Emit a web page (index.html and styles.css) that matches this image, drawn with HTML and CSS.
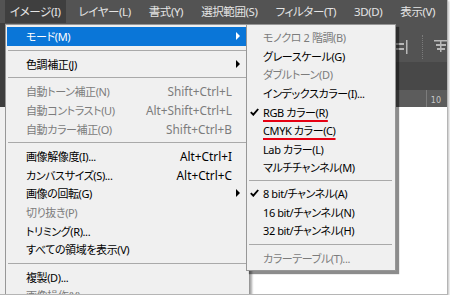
FILE: index.html
```html
<!DOCTYPE html>
<html lang="ja">
<head>
<meta charset="utf-8">
<link rel="stylesheet" href="styles.css">
</head>
<body>
<div class="frame">
  <div class="menubar">
    <span class="mb-item active">イメージ(I)</span>
    <span class="mb-item">レイヤー(L)</span>
    <span class="mb-item">書式(Y)</span>
    <span class="mb-item">選択範囲(S)</span>
    <span class="mb-item">フィルター(T)</span>
    <span class="mb-item">3D(D)</span>
    <span class="mb-item">表示(V)</span>
  </div>
  <div class="workspace">
    <div class="leftstrip"></div>
    <div class="main">
      <div class="optionsbar">
        <svg class="ico" width="12" height="14" viewBox="0 0 12 14"><rect x="0" y="3" width="8" height="2" fill="#b8b8b8"/><rect x="0" y="8" width="8" height="2" fill="#b8b8b8"/><rect x="10" y="0" width="1.5" height="14" fill="#b8b8b8"/></svg>
        <span class="divider"></span>
        <svg class="ico" width="14" height="14" viewBox="0 0 14 14"><rect x="0" y="1" width="14" height="1.5" fill="#b8b8b8"/><rect x="6" y="1" width="1.5" height="12" fill="#b8b8b8"/><rect x="2" y="5" width="10" height="2" fill="#b8b8b8"/><rect x="3" y="9" width="8" height="2" fill="#b8b8b8"/></svg>
      </div>
      <div class="docbar"></div>
      <div class="ruler"><span class="tick"></span><span class="rnum">10</span></div>
      <div class="canvas"></div>
    </div>
  </div>

  <div class="menu main-menu">
    <div class="row hl"><span class="lbl">モード(M)</span><span class="sc"></span><span class="arr white"></span></div>
    <div class="sep"></div>
    <div class="row"><span class="lbl">色調補正(J)</span><span class="sc"></span><span class="arr"></span></div>
    <div class="sep"></div>
    <div class="row dis"><span class="lbl">自動トーン補正(N)</span><span class="sc">Shift+Ctrl+L</span><span></span></div>
    <div class="row dis"><span class="lbl">自動コントラスト(U)</span><span class="sc">Alt+Shift+Ctrl+L</span><span></span></div>
    <div class="row dis"><span class="lbl">自動カラー補正(O)</span><span class="sc">Shift+Ctrl+B</span><span></span></div>
    <div class="sep"></div>
    <div class="row"><span class="lbl">画像解像度(I)...</span><span class="sc">Alt+Ctrl+I</span><span></span></div>
    <div class="row"><span class="lbl">カンバスサイズ(S)...</span><span class="sc">Alt+Ctrl+C</span><span></span></div>
    <div class="row"><span class="lbl">画像の回転(G)</span><span class="sc"></span><span class="arr"></span></div>
    <div class="row dis"><span class="lbl">切り抜き(P)</span><span class="sc"></span><span></span></div>
    <div class="row"><span class="lbl">トリミング(R)...</span><span class="sc"></span><span></span></div>
    <div class="row"><span class="lbl">すべての領域を表示(V)</span><span class="sc"></span><span></span></div>
    <div class="sep"></div>
    <div class="row"><span class="lbl">複製(D)...</span><span class="sc"></span><span></span></div>
    <div class="row dis"><span class="lbl">画像操作(Y)...</span><span class="sc"></span><span></span></div>
  </div>

  <div class="menu sub-menu">
    <div class="srow dis"><span class="chk"></span><span class="lbl">モノクロ 2 階調(B)</span></div>
    <div class="srow"><span class="chk"></span><span class="lbl">グレースケール(G)</span></div>
    <div class="srow dis"><span class="chk"></span><span class="lbl">ダブルトーン(D)</span></div>
    <div class="srow"><span class="chk"></span><span class="lbl">インデックスカラー(I)...</span></div>
    <div class="srow"><span class="chk"><svg width="9" height="8" viewBox="0 0 9 8"><path d="M0.8 4.2 L3.3 6.7 L8.2 1" fill="none" stroke="#000" stroke-width="1.9"/></svg></span><span class="lbl mark">RGB カラー(R)</span></div>
    <div class="srow"><span class="chk"></span><span class="lbl mark">CMYK カラー(C)</span></div>
    <div class="srow"><span class="chk"></span><span class="lbl">Lab カラー(L)</span></div>
    <div class="srow"><span class="chk"></span><span class="lbl">マルチチャンネル(M)</span></div>
    <div class="ssep"></div>
    <div class="srow"><span class="chk"><svg width="9" height="8" viewBox="0 0 9 8"><path d="M0.8 4.2 L3.3 6.7 L8.2 1" fill="none" stroke="#000" stroke-width="1.9"/></svg></span><span class="lbl">8 bit/チャンネル(A)</span></div>
    <div class="srow"><span class="chk"></span><span class="lbl">16 bit/チャンネル(N)</span></div>
    <div class="srow"><span class="chk"></span><span class="lbl">32 bit/チャンネル(H)</span></div>
    <div class="ssep wide"></div>
    <div class="srow dis"><span class="chk"></span><span class="lbl">カラーテーブル(T)...</span></div>
  </div>
</div>
</body>
</html>
```
FILE: styles.css
```css
* { box-sizing: border-box; }
html, body { margin: 0; padding: 0; background: #ffffff; }
body {
  font-family: "Noto Sans", "Noto Sans CJK JP", sans-serif;
  font-size: 11px;
  letter-spacing: -0.4px;
  font-feature-settings: "palt";
}
.frame {
  position: relative;
  width: 448px;
  height: 295px;
  overflow: hidden;
  background: #ffffff;
  border-right: 1px solid #b5b5b5;
  border-bottom: 1px solid #b5b5b5;
  box-shadow: 1px 1px 2px rgba(0,0,0,0.25);
  display: flex;
  flex-direction: column;
}
.menubar {
  height: 23px;
  background: #535353;
  display: flex;
  align-items: stretch;
  padding-left: 5px;
  gap: 8px;
  color: #e4e4e4;
  flex: none;
  font-size: 11.5px;
}
.mb-item {
  flex: none;
  white-space: nowrap;
  padding: 0 5px;
  display: flex;
  align-items: center;
  line-height: 1;
}
.mb-item.active { background: #3f3f3f; }
.workspace { flex: 1; display: flex; }
.leftstrip { width: 5px; background: linear-gradient(#3e3e3e 0, #3e3e3e 84px, #f0f0f0 84px); }
.main { flex: 1; display: flex; flex-direction: column; }
.optionsbar {
  height: 39px;
  background: #535353;
  display: flex;
  align-items: center;
  justify-content: flex-end;
}
.optionsbar .ico { display: block; }
.optionsbar .ico:first-child { margin-right: 14px; margin-top: 8px; }
.optionsbar .ico:last-child { margin-left: 11px; margin-right: -1px; margin-top: 6px; }
.divider {
  width: 1px;
  height: 24px;
  margin-top: 8px;
  border-left: 1px dotted #7a7a7a;
}
.docbar { height: 28px; background: #484848; }
.ruler {
  height: 17px;
  background: #5c5c5c;
  display: flex;
  justify-content: flex-end;
  align-items: flex-end;
  color: #c8c8c8;
  font-family: "DejaVu Sans", sans-serif;
  font-size: 8px;
  letter-spacing: 0;
}
.ruler .tick { width: 1px; height: 17px; background: #7c7c7c; margin-right: 4px; }
.ruler .rnum { margin-right: 6px; margin-bottom: 2px; }
.canvas { flex: 1; background: #ffffff; }

.menu {
  position: absolute;
  background: #f0f0f0;
  border: 1px solid #979797;
  color: #000;
}
.main-menu {
  left: 5px;
  top: 24px;
  width: 245px;
  padding: 2px 1px;
  box-shadow: 2px 2px 2px rgba(0,0,0,0.35);
}
.row {
  height: 18.6px;
  display: grid;
  grid-template-columns: 1fr auto 16px;
  align-items: center;
  padding-left: 19px;
  white-space: nowrap;
}
.row.hl { background: #0a76d8; color: #ffffff; }
.dis { color: #7c7c7c; }
.sc { text-align: right; font-size: 11.8px; letter-spacing: 0; }
.arr {
  justify-self: start;
  margin-left: 4px;
  width: 0; height: 0;
  border-top: 4px solid transparent;
  border-bottom: 4px solid transparent;
  border-left: 4px solid #000;
}
.arr.white { border-left-color: #ffffff; }
.sep {
  height: 9px;
  margin: 0 0 0 1px;
  display: flex;
  align-items: center;
}
.sep::before {
  content: "";
  display: block;
  width: 100%;
  height: 1px;
  background: #a9a9a9;
}
.sub-menu {
  left: 246px;
  top: 24px;
  width: 150px;
  padding: 3px 0 3px 0;
  box-shadow: 3px 3px 1px rgba(0,0,0,0.45);
}
.srow {
  height: 18.6px;
  display: flex;
  align-items: center;
  white-space: nowrap;
}
.chk { width: 16px; padding-left: 3px; display: flex; align-items: center; }
.chk svg { display: block; }
.lbl.mark {
  text-decoration: underline;
  text-decoration-color: #e60012;
  text-decoration-thickness: 2px;
  text-underline-offset: 3px;
}
.ssep {
  height: 7px;
  display: flex;
  align-items: center;
  padding: 0 3px 0 2px;
}
.ssep.wide { height: 9px; }
.ssep::before {
  content: "";
  display: block;
  width: 100%;
  height: 1px;
  background: #a9a9a9;
}
```
